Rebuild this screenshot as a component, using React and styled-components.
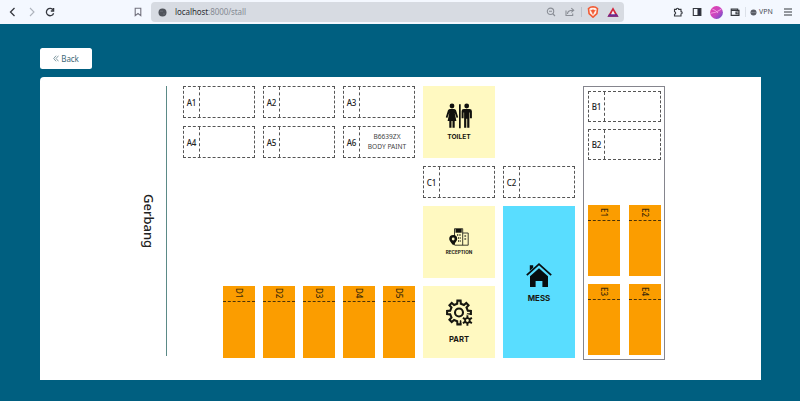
import React from "react";
import styled, { createGlobalStyle } from "styled-components";

const GlobalStyle = createGlobalStyle`
  * { box-sizing: border-box; }
  body { margin: 0; background: #005f80; font-family: "Noto Sans", sans-serif; color: #222; }
  svg { display: block; flex: none; }
`;

const Page = styled.div`
  width: 800px;
  height: 401px;
  overflow: hidden;
  background: #005f80;
`;

const BrowserBar = styled.header`
  height: 24px;
  display: flex;
  align-items: center;
  background: #f4f8ff;
  color: #35383f;
`;

const NavButtons = styled.div`
  width: 151px;
  height: 24px;
  padding-left: 8px;
  display: flex;
  align-items: center;
`;

const NavIcon = styled.svg`
  width: ${(p) => p.$size || 10}px;
  height: ${(p) => p.$size || 10}px;
  margin-left: ${(p) => p.$gap || 0}px;
  fill: none;
  stroke: ${(p) => p.$color || "#35383f"};
  stroke-width: ${(p) => p.$weight || 1.1};
`;

const Glyph = styled.svg`
  width: ${(p) => p.$size}px;
  height: ${(p) => p.$size}px;
  margin-left: ${(p) => p.$gap || 0}px;
`;

const AddressBar = styled.div`
  width: 473px;
  height: 20px;
  padding-left: 7px;
  display: flex;
  align-items: center;
  border-radius: 4px;
  background: #d7dbe2;
`;

const Url = styled.div`
  width: 369px;
  padding-left: 8px;
  font-size: 8px;
  letter-spacing: -0.08px;
  line-height: 12px;
  color: #2c2f34;
`;

const UrlPath = styled.span`
  color: #858a92;
`;

const Divider = styled.span`
  width: 1px;
  height: 10px;
  margin-left: ${(p) => p.$gap}px;
  background: ${(p) => p.$color || "#bdc2cb"};
`;

const Vpn = styled.span`
  width: 17px;
  margin-left: 2px;
  font-size: 7px;
  line-height: 12px;
  color: #4b4e56;
`;

const Content = styled.main`
  padding: 24px 39px 0 40px;
`;

const BackButton = styled.button`
  display: flex;
  align-items: center;
  justify-content: center;
  gap: 2px;
  width: 52px;
  height: 21px;
  padding: 0;
  border: 0;
  border-radius: 2.5px;
  background: #fff;
  color: #3b6876;
  font: 8px "Noto Sans", sans-serif;
  letter-spacing: -0.1px;
`;

const Card = styled.section`
  height: 303px;
  margin-top: 8px;
  padding-top: 9px;
  display: flex;
  align-items: flex-start;
  border-radius: 4px 0 0 0;
  background: #fff;
`;

const Gate = styled.div`
  width: 127px;
  height: 270px;
  padding-right: 7px;
  display: flex;
  align-items: center;
  justify-content: flex-end;
  border-right: 1px solid #5b8a87;
`;

const GateLabel = styled.span`
  writing-mode: vertical-rl;
  font-size: 13px;
  font-weight: 500;
  line-height: 20px;
  color: #222;
`;

const Floor = styled.div`
  margin-left: 16px;
  display: grid;
  grid-template-columns: repeat(10, 32px) 82px;
  grid-template-rows: repeat(7, 32px);
  gap: 8px;
`;

const Stall = styled.div`
  grid-column: ${(p) => p.$col} / span 2;
  grid-row: ${(p) => p.$row};
  display: flex;
  min-height: 0;
  border: 1px dashed #555;
`;

const StallCode = styled.div`
  width: 16px;
  display: flex;
  align-items: center;
  justify-content: center;
  border-right: 1px dashed #555;
  font-size: 8px;
  font-weight: 500;
  letter-spacing: -0.1px;
  color: #222;
`;

const StallInfo = styled.div`
  flex: 1;
  display: flex;
  flex-direction: column;
  align-items: center;
  justify-content: center;
  font-size: 6.6px;
  line-height: 10.4px;
  color: #444;
  white-space: nowrap;
`;

const Bay = styled.div`
  grid-column: ${(p) => p.$col};
  grid-row: ${(p) => p.$row};
  background: #fb9d00;
`;

const BayCode = styled.div`
  height: 16px;
  display: flex;
  align-items: center;
  justify-content: center;
  border-bottom: 1px dashed #4a3208;
`;

const BayText = styled.span`
  writing-mode: vertical-rl;
  font-size: 8px;
  font-weight: 500;
  line-height: 12px;
  color: #3b2a08;
`;

const Room = styled.div`
  grid-column: ${(p) => p.$col} / span 2;
  grid-row: ${(p) => p.$row};
  padding-top: ${(p) => p.$top}px;
  display: flex;
  flex-direction: column;
  align-items: center;
  background: ${(p) => p.$color || "#fff9c1"};
`;

const RoomName = styled.div`
  margin-top: ${(p) => p.$gap}px;
  font: 700 ${(p) => p.$size}px/8px Inter, sans-serif;
  color: #171710;
`;

const Annex = styled.div`
  grid-column: 11;
  grid-row: 1 / span 7;
  height: 274px;
  padding: 4px 3px 0 4px;
  border: 1px solid #85858d;
`;

const AnnexStalls = styled.div`
  display: grid;
  grid-template-columns: 1fr 1fr;
  grid-template-rows: 31px 31px;
  row-gap: 7px;
`;

const AnnexBays = styled.div`
  margin-top: 45px;
  display: grid;
  grid-template-columns: 32px 32px;
  grid-template-rows: 71px 71px;
  column-gap: 9px;
  row-gap: 8.4px;
`;

function ToiletIcon() {
  return (
    <svg width="28" height="26" viewBox="0 0 28 26" fill="#11110e">
      <circle cx="7" cy="3" r="2.4" />
      <path d="M4.9 6h4.2q1.5 0 2 1.6l2.1 6.7-1.5.8-2-5.4 1.7 8.3H9.7v6.7H7.5V18h-1v6.7H4.3V18H2.6l1.7-8.3-2 5.4-1.5-.8 2.1-6.7Q3.4 6 4.9 6Z" />
      <path d="M14 1.3h1.7v24H14z" />
      <circle cx="21.7" cy="3" r="2.4" />
      <path d="M18.9 6h5.6q2.4 0 2.4 2.3v7h-2V9.6h-.5v15.1h-2.2v-9h-.9v9h-2.2V9.6h-.5v5.7h-2v-7Q16.5 6 18.9 6Z" />
    </svg>
  );
}

function ReceptionIcon() {
  return (
    <svg width="20" height="18" viewBox="0 0 20 18" fill="none">
      <path d="M5.5 17V.7h8.2v16.5M13.7 5h5.5v12.2H5.5" stroke="#27271f" strokeWidth=".9" />
      <path d="M6.5 1h6.2v3.7H6.5z" fill="#11110e" />
      <path d="M8 7h4M9 10h3M9 13h3M15.5 8h2.4M15.5 11h2.4" stroke="#27271f" strokeWidth="1.4" strokeDasharray="1.3 1" />
      <path d="M4.2 17.2C2.1 14.6.2 12.8.2 11a4 4 0 0 1 8 0c0 1.8-1.9 3.6-4 6.2Z" fill="#11110e" />
      <circle cx="4.2" cy="11" r="1.4" fill="#fff9c1" />
    </svg>
  );
}

function gearPath(count, cx, cy, outer, inner) {
  const points = [];
  for (let i = 0; i < count; i += 1) {
    [[-0.26, inner], [-0.17, outer], [0.17, outer], [0.26, inner]].forEach(([offset, radius]) => {
      const angle = ((i + offset) / count) * Math.PI * 2 - Math.PI / 2;
      points.push(`${(cx + Math.cos(angle) * radius).toFixed(2)} ${(cy + Math.sin(angle) * radius).toFixed(2)}`);
    });
  }
  return `M${points.join("L")}Z`;
}

function PartIcon() {
  return (
    <svg width="27" height="28" viewBox="0 0 27 28" fill="none" stroke="#171710">
      <path d={gearPath(8, 13, 13.5, 12, 9)} strokeWidth="2.1" />
      <circle cx="13" cy="13.5" r="4" strokeWidth="2.1" />
      <circle cx="21.4" cy="21.5" r="6.2" fill="#fff9c1" stroke="none" />
      <path d="M21.4 16.3v10.4M16.9 18.9l9 5.2M25.9 18.9l-9 5.2" strokeWidth="1.9" />
      <circle cx="21.4" cy="21.5" r="2.3" fill="#fff9c1" strokeWidth="1.8" />
    </svg>
  );
}

function HouseIcon() {
  return (
    <svg width="26" height="26" viewBox="0 0 26 26" fill="#080d0f">
      <path d="M3.8 3.2h3.4v2.6l-3.4 3zM4 14.3l9-8 9 8V25h-5.6v-6H9.6v6H4z" />
      <path d="M.8 13.2 13 2.2l12.2 11" fill="none" stroke="#080d0f" strokeWidth="1.8" />
    </svg>
  );
}

const mainStalls = [
  { code: "A1", col: 1, row: 1 },
  { code: "A2", col: 3, row: 1 },
  { code: "A3", col: 5, row: 1 },
  { code: "A4", col: 1, row: 2 },
  { code: "A5", col: 3, row: 2 },
  { code: "A6", col: 5, row: 2, lines: ["B6639ZX", "BODY PAINT"] },
  { code: "C1", col: 7, row: 3 },
  { code: "C2", col: 9, row: 3 },
];

function StallBox({ stall }) {
  return (
    <Stall $col={stall.col} $row={stall.row}>
      <StallCode>{stall.code}</StallCode>
      <StallInfo>{(stall.lines || []).map((line) => <span key={line}>{line}</span>)}</StallInfo>
    </Stall>
  );
}

function BayBox({ code, col, row }) {
  return (
    <Bay $col={col} $row={row}>
      <BayCode><BayText>{code}</BayText></BayCode>
    </Bay>
  );
}

export default function App() {
  return (
    <Page>
      <GlobalStyle />
      <BrowserBar>
        <NavButtons>
          <NavIcon viewBox="0 0 10 10" $weight={1.3}><path d="M6.5 1 2.5 5l4 4" /></NavIcon>
          <NavIcon viewBox="0 0 10 10" $gap={9} $color="#aeb3bc"><path d="m3 1 4 4-4 4" /></NavIcon>
          <NavIcon viewBox="0 0 10 10" $gap={8} $weight={1.3}><path d="M8.6 6.2A3.7 3.7 0 1 1 8.2 3M8.6 1v3H5.8" /></NavIcon>
          <NavIcon viewBox="0 0 10 10" $gap={78} $color="#72717e"><path d="M2.2 1.2h5.6v7.5L5 6.5 2.2 8.7z" /></NavIcon>
        </NavButtons>
        <AddressBar>
          <Glyph $size={9} viewBox="0 0 9 9"><circle cx="4.5" cy="4.5" r="4" fill="#50545b" /><path d="M2 3.2h3M5 6h2" stroke="#747981" strokeWidth=".7" /></Glyph>
          <Url>localhost<UrlPath>:8000/stall</UrlPath></Url>
          <NavIcon viewBox="0 0 10 10" $gap={10} $color="#8a8e96"><circle cx="4.5" cy="4.3" r="3.2" /><path d="m7 7 2 2M3 4.3h3" /></NavIcon>
          <NavIcon viewBox="0 0 10 10" $gap={9} $color="#8a8e96"><path d="M1 3.5v5h6.7V6.6M2.5 7c0-2.5 1.5-3.7 5.6-3.7M6.3 1.2l2.4 2.1-2.4 2" /></NavIcon>
          <Divider $gap={6} />
          <NavIcon viewBox="0 0 12 12" $gap={5} $size={12} $color="#f15b35" $weight={1.6}><path d="m3.5 1.2 2.5-.4 2.5.4 2 1.4-.6 5L6 11.2 2.1 7.6l-.6-5z" fill="#fff2ea" /><path d="m3.6 4 1.2.3L6 3.5l1.2.8L8.4 4 7 6.3 6 8.5 5 6.3z" fill="#f15b35" strokeWidth=".4" /></NavIcon>
          <Glyph $size={12} $gap={8} viewBox="0 0 12 12"><path d="m6 1.2 5.5 9.6H.5z" fill="#d3243b" /><path d="M.5 10.8h11L9.8 8H2.2z" fill="#712b8c" /><path d="m6 4.6 2 3.6H4z" fill="#f4f2f6" /></Glyph>
        </AddressBar>
        <NavIcon viewBox="0 0 10 10" $gap={49}><path d="M1.5 2.4h1.8a1.2 1.2 0 0 1 2.4 0H8v2.2a1.2 1.2 0 0 1 0 2.4v2H1.5V7.2a1.2 1.2 0 0 0 0-2.4z" /></NavIcon>
        <NavIcon viewBox="0 0 10 10" $gap={9}><path d="M1.3 1.5h7.4v7H1.3z" /><path d="M6 1.5h2.7v7H6z" fill="#282c42" /></NavIcon>
        <Glyph $size={13} $gap={8} viewBox="0 0 13 13"><defs><linearGradient id="avatar" x2="1" y2="1"><stop stopColor="#e33eac" /><stop offset=".55" stopColor="#ca48c1" /><stop offset="1" stopColor="#5652cb" /></linearGradient></defs><circle cx="6.5" cy="6.5" r="6.4" fill="url(#avatar)" /><path d="M.6 7.3Q6 7 11.3 3.2M2.4 3.2Q6 4 8 7" fill="none" stroke="#f3a1e3" strokeWidth=".9" /></Glyph>
        <NavIcon viewBox="0 0 10 10" $gap={7}><path d="M1.2 2h6.5v1.4H9v5H1.2zM1.2 3.4h6.5M6 5h3v1.8H6z" /></NavIcon>
        <Divider $gap={5} $color="#dce1e9" />
        <Glyph $size={7} $gap={4} viewBox="0 0 7 7"><circle cx="3.5" cy="3.5" r="3" fill="#5b5e66" /><path d="M.7 3.5h5.6" stroke="#92969e" strokeWidth=".6" /></Glyph>
        <Vpn>VPN</Vpn>
        <NavIcon viewBox="0 0 10 10" $gap={7}><path d="M1 2h8M1 5h8M1 8h8" /></NavIcon>
      </BrowserBar>
      <Content>
        <BackButton>
          <svg width="6" height="7" viewBox="0 0 6 7" fill="none" stroke="#759098" strokeWidth=".9"><path d="M3.1.7.7 3.5l2.4 2.8M5.5.7 3.1 3.5l2.4 2.8" /></svg>
          <span>Back</span>
        </BackButton>
        <Card>
          <Gate><GateLabel>Gerbang</GateLabel></Gate>
          <Floor>
            {mainStalls.map((stall) => <StallBox key={stall.code} stall={stall} />)}
            {[1, 2, 3, 4, 5].map((n) => <BayBox key={n} code={`D${n}`} col={n + 1} row="6 / span 2" />)}
            <Room $col={7} $row="1 / span 2" $top={17}><ToiletIcon /><RoomName $size={6.7} $gap={4}>TOILET</RoomName></Room>
            <Room $col={7} $row="4 / span 2" $top={22}><ReceptionIcon /><RoomName $size={4.6} $gap={3}>RECEPTION</RoomName></Room>
            <Room $col={7} $row="6 / span 2" $top={13}><PartIcon /><RoomName $size={7.6} $gap={9}>PART</RoomName></Room>
            <Room $col={9} $row="4 / span 4" $top={56} $color="#59ddff"><HouseIcon /><RoomName $size={7.9} $gap={6}>MESS</RoomName></Room>
            <Annex>
              <AnnexStalls>
                <StallBox stall={{ code: "B1", col: 1, row: 1 }} />
                <StallBox stall={{ code: "B2", col: 1, row: 2 }} />
              </AnnexStalls>
              <AnnexBays>
                <BayBox code="E1" col={1} row={1} />
                <BayBox code="E2" col={2} row={1} />
                <BayBox code="E3" col={1} row={2} />
                <BayBox code="E4" col={2} row={2} />
              </AnnexBays>
            </Annex>
          </Floor>
        </Card>
      </Content>
    </Page>
  );
}
